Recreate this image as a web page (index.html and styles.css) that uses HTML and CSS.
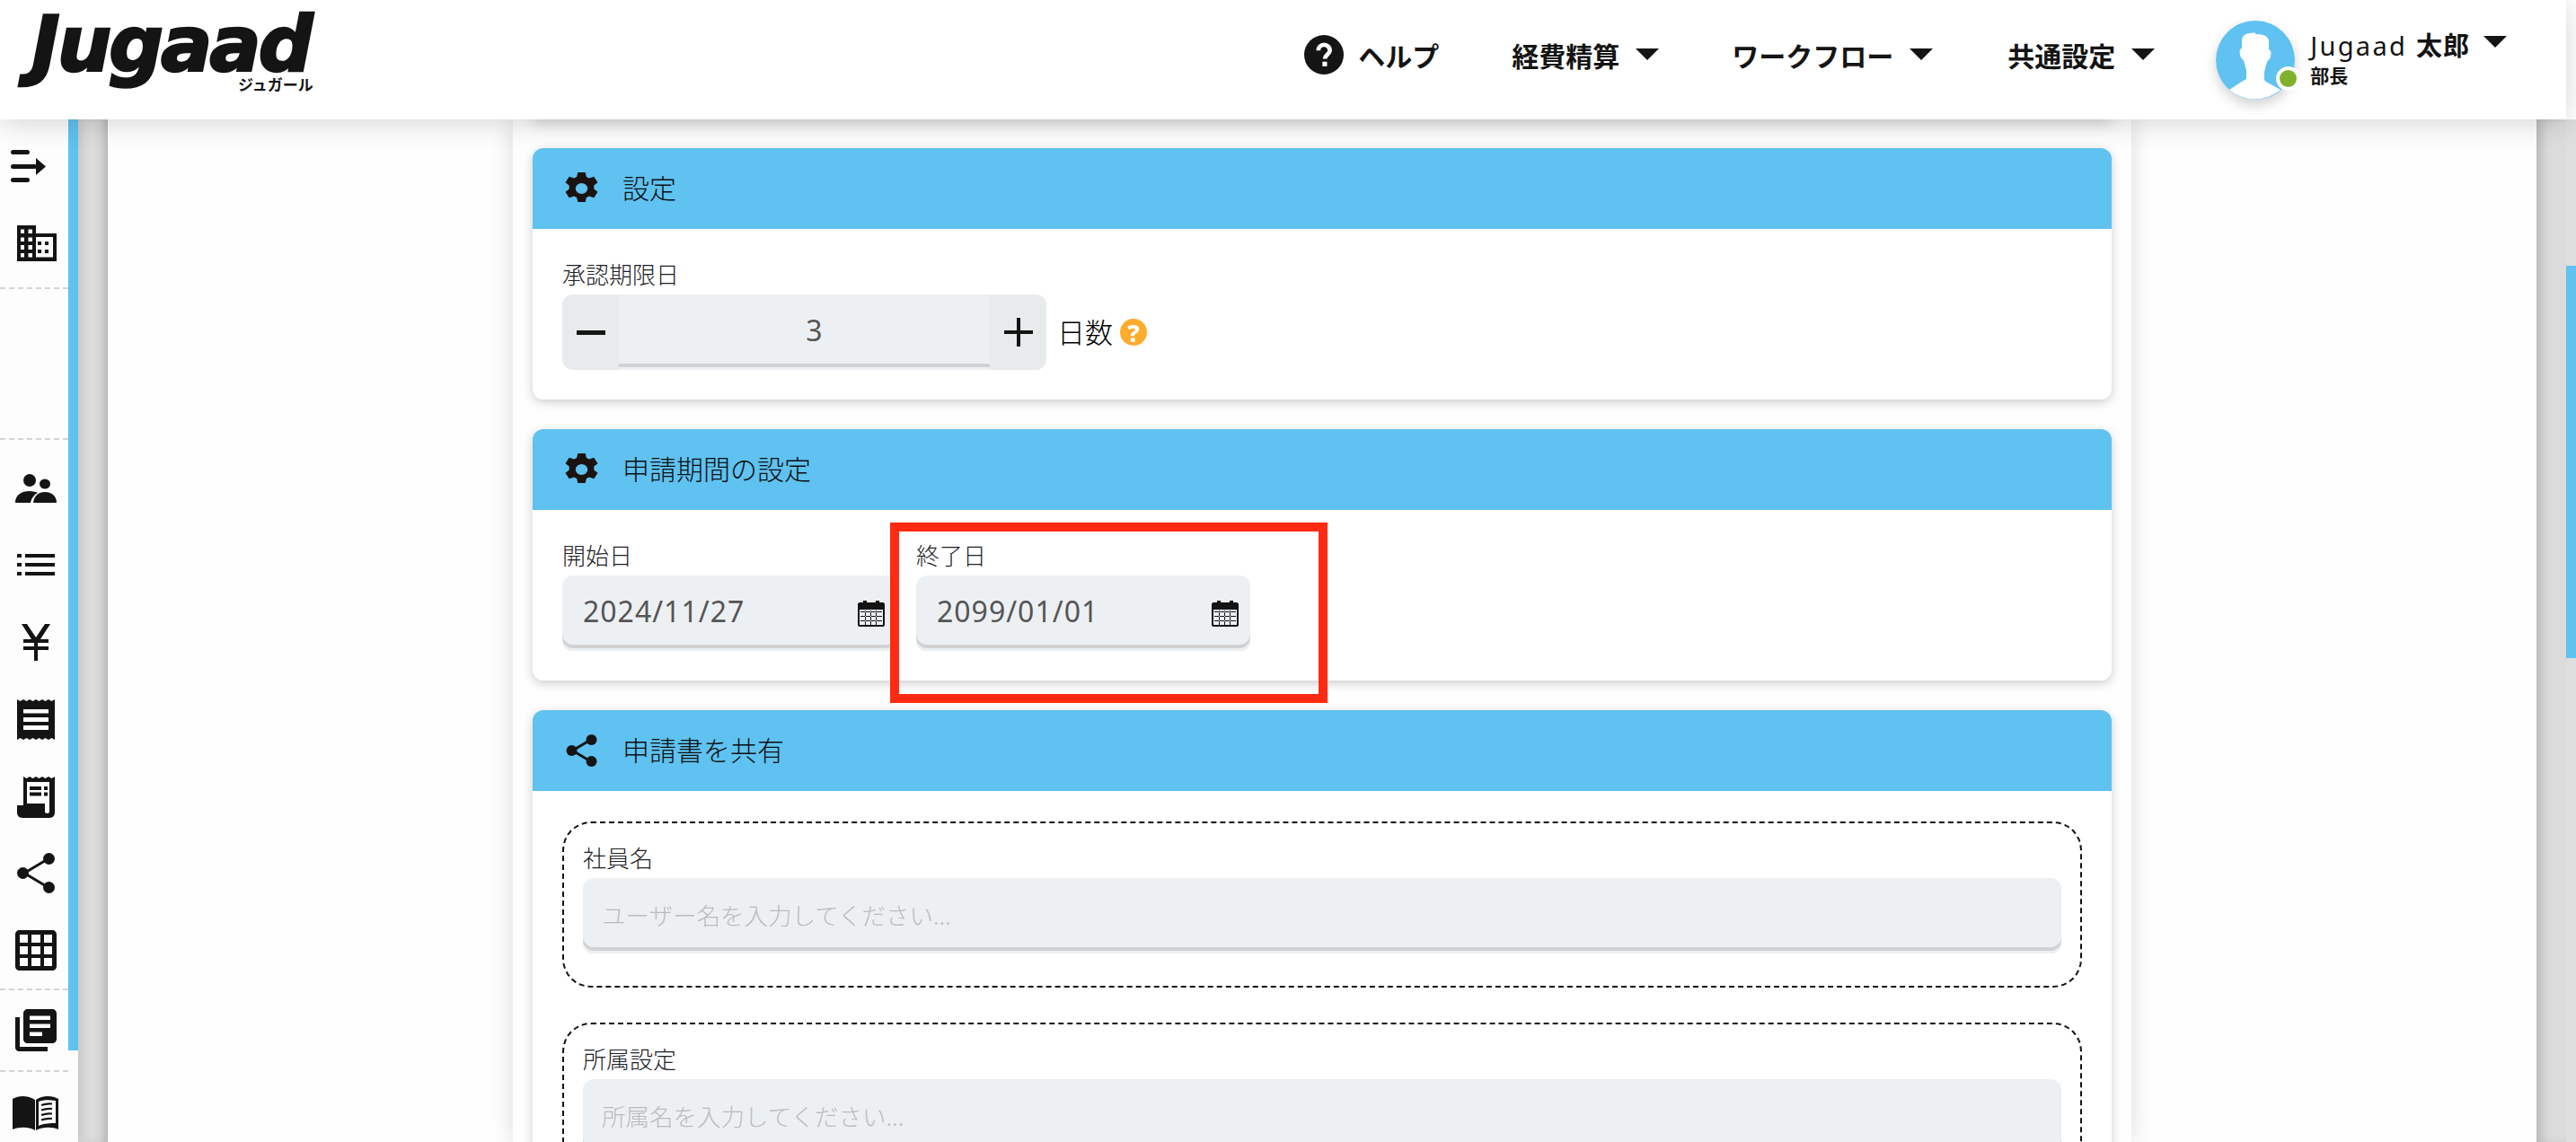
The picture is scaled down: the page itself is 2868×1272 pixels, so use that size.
FILE: index.html
```html
<!DOCTYPE html>
<html lang="ja">
<head>
  <meta charset="UTF-8" />
  <title>Jugaad</title>
  <link rel="stylesheet" href="styles.css">
</head>
<body>
  <header class="topbar">
    <div class="logo">
      <span class="logo-word">Jugaad</span>
      <span class="logo-sub">ジュガール</span>
    </div>
    <nav class="topnav">
      <a class="nav-item nav-help">
        <svg class="help-icon" viewBox="0 0 24 24"><circle cx="12" cy="12" r="12" fill="#141414"/><path d="M8.6 9.4a3.5 3.5 0 0 1 7 0c0 2.4-3 2.6-3 5" fill="none" stroke="#fff" stroke-width="2.6"/><rect x="11.1" y="16.2" width="2.8" height="2.8" fill="#fff"/></svg>
        <span>ヘルプ</span>
      </a>
      <a class="nav-item nav-keihi"><span>経費精算</span><i class="caret"></i></a>
      <a class="nav-item nav-flow"><span>ワークフロー</span><i class="caret"></i></a>
      <a class="nav-item nav-common"><span>共通設定</span><i class="caret"></i></a>
      <div class="user">
        <div class="avatar">
          <svg viewBox="0 0 88 88"><circle cx="44" cy="44" r="44" fill="#5fc2f0"/><path d="M44 13.500c-11 0-15 3-15 9v8c-2 1-3 3-2 7 0 4 3 5 4 7l3 11v8c0 2-1 2-3 3L15 77a44 44 0 0 0 57 0L56 68c-2-1-2-2-2-3v-8l3-11c1-2 4-3 4-7 1-4 0-6-2-7v-8c0-6-4-9-15-9z" fill="#fff"/></svg>
          <i class="status-dot"></i>
        </div>
        <div class="user-text">
          <div class="user-name"><span>Jugaad <b>太郎</b></span><i class="caret"></i></div>
          <div class="user-role">部長</div>
        </div>
      </div>
    </nav>
  </header>

  <div class="layout">
    <aside class="sidebar">
      <div class="side-track"></div>
      <div class="side-group group-top">
        <svg class="ic ic-menu" viewBox="0 0 39 36"><rect x="0" y="0" width="21" height="5" rx="2.5"/><rect x="0" y="16" width="29" height="5" rx="2.5"/><path d="M28 9l11 9.500-11 9.500z"/><rect x="0" y="31" width="21" height="5" rx="2.5"/></svg>
        <svg class="ic ic-building" viewBox="0 0 44 40"><path fill-rule="evenodd" d="M0 0h21v9h23v31H0zM4 4.500V9h4V4.500zm8.500 0V9H17V4.500zM4 13.500V18h4v-4.500zm8.500 0V18H17v-4.500zM4 22v5h4v-5zm8.500 0v5H17v-5zM4 31v4.500h4V31zm8.500 0v4.500H17V31zM21 13v22.500h19V13zm2 5h4v4h-4zm8 0h4v4h-4zm-8 9h4v4h-4zm8 0h4v4h-4z"/></svg>
      </div>
      <div class="side-group group-empty"></div>
      <div class="side-group group-main">
        <svg class="ic ic-people" viewBox="0 0 46 32"><circle cx="16" cy="7" r="7"/><path d="M0 32c0-9 7-13 16-13 4 0 7 1 9 2-4 2-7 6-8 11z"/><ellipse cx="33" cy="11" rx="6" ry="5.5"/><path d="M20 32c1-8 6-12 13-12s13 4 13 12z"/></svg>
        <svg class="ic ic-list" viewBox="0 0 42 24"><rect y="0" width="5" height="4"/><rect x="9" y="0" width="33" height="4"/><rect y="10" width="5" height="4"/><rect x="9" y="10" width="33" height="4"/><rect y="20" width="5" height="4"/><rect x="9" y="20" width="33" height="4"/></svg>
        <svg class="ic ic-yen" viewBox="0 0 32 41"><path d="M0 0h6l10 15L26 0h6L21 17h9v4H18v4h12v4H18v12h-4V29H2v-4h12v-4H2v-4h9z"/></svg>
        <svg class="ic ic-receipt" viewBox="0 0 42 45"><path fill-rule="evenodd" d="M0 0l3.500 2L7 0l3.500 2L14 0l3.500 2L21 0l3.500 2L28 0l3.500 2L35 0l3.500 2L42 0v45l-3.500-2-3.500 2-3.500-2-3.500 2-3.500-2-3.500 2-3.500-2-3.500 2-3.500-2L7 45l-3.500-2L0 45zM7 11v4.500h28V11zm0 9v5h28v-5zm0 9v5h28v-5z"/></svg>
        <svg class="ic ic-receipt2" viewBox="0 0 42 46"><path fill-rule="evenodd" d="M7 0l3.500 2L14 0l3.500 2L21 0l3.500 2L28 0l3.500 2L35 0l3.500 2L42 0v40c0 3-2 6-6 6H6c-4 0-6-3-6-6v-8h7zm4 6v24h20v9c0 1 1 2 2.500 2s2.500-1 2.500-2V6zm3 5h13v4H14zm16 0h4v4h-4zm-16 6.500h13v4H14zm16 0h4v4h-4z"/></svg>
        <svg class="ic ic-share" viewBox="0 0 42 45"><path d="M8 22.500L34 7M8 22.500L34 38" fill="none" stroke="#141414" stroke-width="3"/><circle cx="6.500" cy="22.500" r="6.500"/><circle cx="35.500" cy="6.500" r="6.500"/><circle cx="35.500" cy="38.500" r="6.500"/></svg>
        <svg class="ic ic-grid" viewBox="0 0 46 45"><path fill-rule="evenodd" d="M5 0h36c3 0 5 2 5 5v35c0 3-2 5-5 5H5c-3 0-5-2-5-5V5c0-3 2-5 5-5zM5 5v9h9V5zm13 0v9h10V5zm14 0v9h9V5zM5 18v9h9v-9zm13 0v9h10v-9zm14 0v9h9v-9zM5 31v9h9v-9zm13 0v9h10v-9zm14 0v9h9v-9z"/></svg>
      </div>
      <div class="side-group group-news">
        <svg class="ic ic-news" viewBox="0 0 46 47"><path fill-rule="evenodd" d="M14 0h27c3 0 5 2 5 5v28c0 3-2 5-5 5H14c-3 0-5-2-5-5V5c0-3 2-5 5-5zm2 7.500V12h23V7.500zm0 9V21h23v-4.500zm0 9V30h14v-4.500z"/><path d="M0 9h5v33h31v5H4c-2 0-4-2-4-4z"/></svg>
      </div>
      <div class="side-group group-book">
        <svg class="ic ic-book" viewBox="0 0 51 40"><path d="M0 4c7-4 17-4 25 1v34c-7-4-17-4-25-1z"/><path fill-rule="evenodd" d="M26 5c7-5 18-5 25-1v34c-7-3-17-3-25 1zM29 7v27c6-3 13-3 19-3V6c-7-1-14-1-19 1z"/><path d="M32 11c4-1.500 8-2 12-1.500M32 16.500c4-1.500 8-2 12-1.500M32 22c4-1.500 8-2 12-1.500M32 27.500c4-1.500 8-2 12-1.500" fill="none" stroke="#141414" stroke-width="2.2"/></svg>
      </div>
    </aside>

    <div class="gutter"></div>

    <div class="frame">
      <div class="side-panel"></div>
      <main class="center">
        <div class="prev-card"></div>

        <section class="card card-setting">
          <h2 class="card-head">
            <svg class="gear" viewBox="1 0 22 24" preserveAspectRatio="none"><path fill-rule="evenodd" d="M9.500 0h5l.7 3.300 1.800 1 3.200-1.100 2.500 4.300-2.500 2.200v2.600l2.500 2.200-2.500 4.300-3.200-1.100-1.800 1-.7 3.300h-5l-.7-3.300-1.800-1-3.200 1.100-2.500-4.300 2.500-2.200v-2.600L1.300 7.500l2.500-4.300L7 4.300l1.800-1zM12 8a4 4 0 1 0 0 8 4 4 0 0 0 0-8z"/></svg>
            <span>設定</span>
          </h2>
          <div class="card-body">
            <label class="field-label">承認期限日</label>
            <div class="stepper-row">
              <div class="stepper">
                <button class="step-btn"><svg viewBox="0 0 32 32"><rect x="0" y="14" width="32" height="5"/></svg></button>
                <div class="step-input">3</div>
                <button class="step-btn"><svg viewBox="0 0 32 32"><rect x="0" y="14" width="32" height="4"/><rect x="14" y="0" width="4" height="32"/></svg></button>
              </div>
              <span class="unit">日数</span>
              <i class="hint">?</i>
            </div>
          </div>
        </section>

        <section class="card card-period">
          <h2 class="card-head">
            <svg class="gear" viewBox="1 0 22 24" preserveAspectRatio="none"><path fill-rule="evenodd" d="M9.500 0h5l.7 3.300 1.800 1 3.200-1.100 2.500 4.300-2.500 2.200v2.600l2.500 2.200-2.500 4.300-3.200-1.100-1.800 1-.7 3.300h-5l-.7-3.300-1.800-1-3.200 1.100-2.500-4.300 2.500-2.200v-2.600L1.300 7.500l2.500-4.300L7 4.300l1.800-1zM12 8a4 4 0 1 0 0 8 4 4 0 0 0 0-8z"/></svg>
            <span>申請期間の設定</span>
          </h2>
          <div class="card-body date-row">
            <div class="date-field">
              <label class="field-label">開始日</label>
              <div class="text-input date-input">
                <span>2024/11/27</span>
                <svg class="cal" viewBox="0 0 30 30"><path fill-rule="evenodd" d="M2 3h4V1h4v2h10V1h4v2h4c1 0 2 1 2 2v23c0 1-1 2-2 2H2c-1 0-2-1-2-2V5c0-1 1-2 2-2zm0 8v17h26V11zm1 2h24v1H3zm0 5h24v1H3zm0 5h24v1H3zM8 12h1v16H8zm6 0h1v16h-1zm6 0h1v16h-1z"/></svg>
              </div>
            </div>
            <div class="date-field">
              <label class="field-label">終了日</label>
              <div class="text-input date-input">
                <span>2099/01/01</span>
                <svg class="cal" viewBox="0 0 30 30"><path fill-rule="evenodd" d="M2 3h4V1h4v2h10V1h4v2h4c1 0 2 1 2 2v23c0 1-1 2-2 2H2c-1 0-2-1-2-2V5c0-1 1-2 2-2zm0 8v17h26V11zm1 2h24v1H3zm0 5h24v1H3zm0 5h24v1H3zM8 12h1v16H8zm6 0h1v16h-1zm6 0h1v16h-1z"/></svg>
              </div>
            </div>
          </div>
          <div class="red-box"></div>
        </section>

        <section class="card card-share">
          <h2 class="card-head">
            <svg class="share" viewBox="0 0 36 36"><path d="M8 18L28 6M8 18l20 12" fill="none" stroke="#141414" stroke-width="3"/><circle cx="7" cy="18" r="6"/><circle cx="29" cy="6" r="6"/><circle cx="29" cy="30" r="6"/></svg>
            <span>申請書を共有</span>
          </h2>
          <div class="card-body">
            <div class="dash-box">
              <label class="field-label">社員名</label>
              <div class="text-input placeholder">ユーザー名を入力してください...</div>
            </div>
            <div class="dash-box">
              <label class="field-label">所属設定</label>
              <div class="text-input placeholder">所属名を入力してください...</div>
            </div>
          </div>
        </section>
      </main>
      <div class="side-panel"></div>
    </div>

    <div class="gutter gutter-right"></div>
    <div class="page-scroll"><div class="page-thumb"></div></div>
  </div>
</body>
</html>
```

FILE: styles.css
```css
:root {
  --blue: #5fc2f0;
  --ink: #141414;
  --field: #edf0f3;
  --field-btn: #e8ebec;
  --line: #d2d2d2;
  --gutter: #dcdcdc;
}

* {
  margin: 0;
  padding: 0;
  box-sizing: border-box;
}

html, body {
  height: 100%;
  overflow: hidden;
  background: #fff;
  color: var(--ink);
  font-family: "Noto Sans", "Noto Sans CJK JP", sans-serif;
}

/* Header */
.topbar {
  position: relative;
  z-index: 5;
  display: flex;
  align-items: center;
  justify-content: space-between;
  height: 133px;
  width: 2857px;
  background: #fff;
  box-shadow: 0 4px 30px rgba(0,0,0,0.16);
}

.logo {
  position: relative;
  width: 350px;
  height: 133px;
  margin-left: 21px;
}

.logo-word {
  display: block;
  padding-left: 14px;
  font-family: "DejaVu Sans", sans-serif;
  font-size: 85px;
  font-weight: 700;
  font-style: italic;
  line-height: 99px;
  letter-spacing: -3px;
  color: var(--ink);
  -webkit-text-stroke: 2.5px var(--ink);
}

.logo-sub {
  position: absolute;
  left: 244px;
  top: 82px;
  font-family: "Noto Sans CJK JP", sans-serif;
  font-size: 17px;
  font-weight: 700;
  line-height: 24px;
}

.topnav {
  display: flex;
  align-items: center;
  height: 133px;
}

.nav-item {
  display: flex;
  align-items: center;
  margin-bottom: 12px;
  font-family: "Noto Sans CJK JP", sans-serif;
  font-size: 30px;
  font-weight: 600;
  line-height: 44px;
  color: var(--ink);
}

.nav-help { gap: 16px; margin-right: 81px; }
.nav-keihi { margin-right: 81px; }
.nav-flow { margin-right: 83px; }
.nav-common { margin-right: 68px; }

.help-icon {
  width: 44px;
  height: 44px;
}

.caret {
  display: inline-block;
  width: 0;
  height: 0;
  margin-left: 18px;
  border-left: 13px solid transparent;
  border-right: 13px solid transparent;
  border-top: 13px solid var(--ink);
}

.user {
  display: flex;
  align-items: center;
  gap: 17px;
  margin-right: 66px;
}

.avatar {
  position: relative;
  width: 88px;
  height: 88px;
  border-radius: 50%;
  box-shadow: 0 6px 14px rgba(0,0,0,0.18);
}

.avatar svg {
  display: block;
  width: 88px;
  height: 88px;
}

.status-dot {
  position: absolute;
  right: -6px;
  bottom: 10px;
  width: 27px;
  height: 27px;
  border-radius: 50%;
  background: #7fb12c;
  border: 4.5px solid #fff;
}

.user-name {
  display: flex;
  align-items: center;
  font-family: "Noto Sans", "Noto Sans CJK JP", sans-serif;
  font-size: 29px;
  letter-spacing: 2.3px;
  line-height: 40px;
  margin-top: -6px;
}

.user-name b {
  font-weight: 700;
  letter-spacing: 1px;
}

.user-name .caret {
  margin-left: 15px;
  margin-top: -8px;
}

.user-role {
  font-family: "Noto Sans CJK JP", sans-serif;
  font-size: 21px;
  font-weight: 700;
  line-height: 28px;
  margin-top: -2px;
}

/* Page below header */
.layout {
  display: flex;
  height: 1139px;
  overflow: hidden;
}

.sidebar {
  position: relative;
  z-index: 3;
  flex: none;
  width: 87px;
  height: 1139px;
  background: #fdfdfd;
  box-shadow: 3px 0 12px rgba(0,0,0,0.12);
  fill: var(--ink);
}

.side-track {
  position: absolute;
  top: 0;
  right: 0;
  width: 11px;
  height: 1037px;
  background: var(--blue);
}

.side-group {
  display: flex;
  flex-direction: column;
  width: 76px;
  border-bottom: 2px dashed #d4d4d4;
}

.ic {
  display: block;
  flex: none;
}

.group-top { height: 189px; }
.ic-menu { width: 39px; height: 36px; margin: 34px 0 0 12px; }
.ic-building { width: 44px; height: 40px; margin: 48px 0 0 19px; }

.group-empty { height: 168px; }

.group-main { height: 613px; }
.ic-people { width: 46px; height: 32px; margin: 38px 0 0 17px; }
.ic-list { width: 42px; height: 24px; margin: 57px 0 0 19px; }
.ic-yen { width: 32px; height: 41px; margin: 54px 0 0 24px; }
.ic-receipt { width: 42px; height: 45px; margin: 43px 0 0 19px; }
.ic-receipt2 { width: 42px; height: 46px; margin: 41px 0 0 19px; }
.ic-share { width: 42px; height: 45px; margin: 39px 0 0 19px; }
.ic-grid { width: 46px; height: 45px; margin: 41px 0 0 17px; }

.group-news { height: 91px; }
.ic-news { width: 46px; height: 47px; margin: 21px 0 0 17px; }

.group-book { border-bottom: 0; }
.ic-book { width: 51px; height: 40px; margin: 26px 0 0 14px; }

.gutter {
  flex: none;
  width: 33px;
  background: var(--gutter);
  box-shadow: inset -10px 0 12px -6px rgba(0,0,0,0.2);
}

.gutter-right {
  box-shadow: inset 10px 0 14px -6px rgba(0,0,0,0.2);
}

.frame {
  display: flex;
  flex: none;
  width: 2704px;
  background: #fff;
}

.side-panel {
  flex: 1;
  background: #fefefe;
}

.center {
  position: relative;
  z-index: 1;
  flex: none;
  width: 1802px;
  padding: 32px 22px 0;
  background: #fefefe;
  box-shadow: 0 0 24px rgba(0,0,0,0.14);
}

.prev-card {
  position: absolute;
  top: -20px;
  left: 22px;
  right: 22px;
  height: 20px;
  background: #fff;
  box-shadow: 0 4px 16px rgba(0,0,0,0.16);
}

.page-scroll {
  flex: none;
  width: 11px;
  margin-top: -133px;
  background: #dedede;
}

.page-thumb {
  width: 11px;
  height: 437px;
  margin-top: 296px;
  background: var(--blue);
}

/* Cards */
.card {
  position: relative;
  background: #fff;
  border-radius: 12px;
  margin-bottom: 33px;
  box-shadow: 0 3px 12px rgba(0,0,0,0.2);
}

.card-setting { height: 280px; }
.card-period { height: 280px; }

.card-head {
  display: flex;
  align-items: center;
  height: 90px;
  padding-left: 36px;
  background: var(--blue);
  border-radius: 12px 12px 0 0;
  font-family: "Noto Sans CJK JP", sans-serif;
  font-size: 30px;
  font-weight: 300;
  line-height: 44px;
  color: #0d0f12;
}

.card-head span {
  margin-top: -5px;
}

.gear {
  width: 37px;
  height: 36px;
  margin-right: 27px;
  fill: #1a1311;
}

.share {
  width: 37px;
  height: 36px;
  margin-right: 27px;
  fill: var(--ink);
}

.card-body {
  padding: 31px 33px 0;
}

.field-label {
  display: block;
  height: 42px;
  font-family: "Noto Sans CJK JP", sans-serif;
  font-size: 26px;
  font-weight: 300;
  line-height: 38px;
  color: #1d2126;
}

/* Number stepper */
.stepper-row {
  display: flex;
  align-items: center;
}

.stepper {
  display: flex;
  width: 539px;
  height: 84px;
  border-radius: 12px;
  overflow: hidden;
  background: var(--field);
}

.step-btn {
  flex: none;
  display: flex;
  align-items: center;
  justify-content: center;
  width: 63px;
  border: 0;
  background: var(--field-btn);
}

.step-btn svg {
  width: 32px;
  height: 32px;
  fill: var(--ink);
}

.step-input {
  flex: 1;
  height: 81px;
  padding-left: 22px;
  border-bottom: 4px solid var(--line);
  text-align: center;
  font-size: 32px;
  line-height: 80px;
  color: #555;
}

.unit {
  margin: -3px 0 0 12px;
  font-family: "Noto Sans CJK JP", sans-serif;
  font-size: 31px;
  font-weight: 300;
  line-height: 44px;
  color: #000;
}

.hint {
  display: flex;
  align-items: center;
  justify-content: center;
  width: 30px;
  height: 30px;
  margin-left: 8px;
  border-radius: 50%;
  background: #ffab2b;
  color: #fff;
  font-size: 27px;
  font-style: normal;
  font-weight: 800;
}

/* Text inputs */
.text-input {
  height: 84px;
  border-radius: 12px;
  background: var(--field);
  box-shadow: inset 0 -3px 0 var(--field), inset 0 -7px 0 var(--line);
  font-size: 32px;
  line-height: 80px;
  color: #555;
}

.date-row {
  display: flex;
  gap: 22px;
}

.date-field {
  width: 372px;
}

.date-input {
  display: flex;
  align-items: center;
  justify-content: space-between;
  padding: 0 13px 4px 23px;
  letter-spacing: 1px;
}

.cal {
  width: 30px;
  height: 30px;
  margin-top: 4px;
  fill: var(--ink);
}

.red-box {
  position: absolute;
  left: 398px;
  top: 104px;
  width: 487px;
  height: 201px;
  border: 10px solid #ff2a12;
  z-index: 2;
}

.card-period .date-field:first-child .text-input {
  position: relative;
  z-index: 1;
}

.dash-box {
  height: 185px;
  margin-bottom: 39px;
  padding: 19px 21px 0;
  border: 2px dashed #111;
  border-radius: 32px;
}

.card-share .card-body {
  padding-top: 34px;
}

.placeholder {
  padding-left: 21px;
  font-family: "Noto Sans CJK JP", sans-serif;
  font-size: 26.5px;
  font-weight: 300;
  line-height: 81px;
  color: #bbb;
}
```
